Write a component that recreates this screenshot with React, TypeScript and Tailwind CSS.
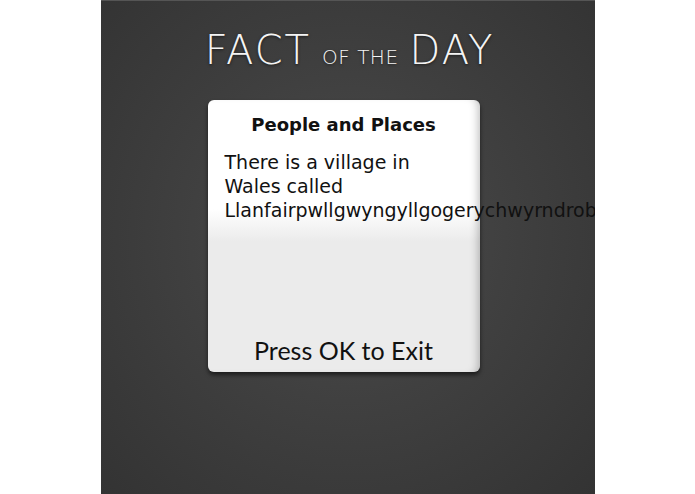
export default function App() {
  return (
    <div className="w-full h-[494px] bg-white">
      <div className="relative mx-auto w-[494px] h-[494px] overflow-hidden border-t border-[#555] bg-[radial-gradient(ellipse_at_50%_48%,#4c4c4c_0%,#404040_45%,#333333_100%)]">
        {/* Title */}
        <div
          className="flex items-baseline justify-center gap-[11px] pt-[29px] pl-[4px] text-[#f4f4f4] [text-shadow:0_1px_3px_rgba(0,0,0,0.6)]"
          style={{ fontFamily: '"DejaVu Sans", sans-serif' }}
        >
          <span className="text-[40px] leading-none font-extralight tracking-[2px]">FACT</span>
          <span className="text-[20px] leading-none font-extralight tracking-[0.5px]">OF THE</span>
          <span className="text-[40px] leading-none font-extralight tracking-[2px]">DAY</span>
        </div>

        {/* Card */}
        <div className="mt-[30px] ml-[107px] w-[272px] h-[272px] rounded-[6px] bg-[linear-gradient(180deg,#ffffff_0%,#ffffff_40%,#ebebeb_52%,#ebebeb_100%)] shadow-[0_3px_4px_rgba(0,0,0,0.55),inset_-8px_0_8px_-6px_rgba(0,0,0,0.25)] flex flex-col">
          <div
            className="pt-[11px] text-center text-[18px] font-bold text-[#111]"
            style={{ fontFamily: '"DejaVu Sans", sans-serif' }}
          >
            People and Places
          </div>
          <div
            className="mt-[12px] pl-[17px] text-[19px] leading-[24px] text-[#111]"
            style={{ fontFamily: '"DejaVu Sans", sans-serif' }}
          >
            <div>There is a village in</div>
            <div>Wales called</div>
            <div className="whitespace-nowrap">Llanfairpwllgwyngyllgogerychwyrndrobwllllantysiliogogogoch</div>
          </div>
          <div
            className="mt-auto pb-[3px] text-center text-[25px] text-[#111]"
            style={{ fontFamily: 'Lato, sans-serif' }}
          >
            Press OK to Exit
          </div>
        </div>
      </div>
    </div>
  );
}
